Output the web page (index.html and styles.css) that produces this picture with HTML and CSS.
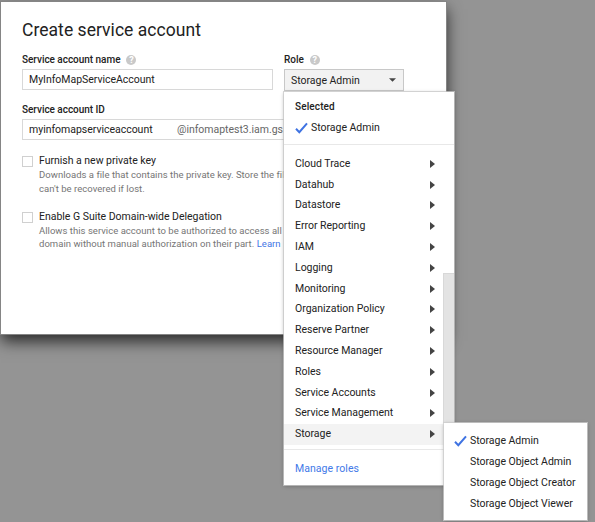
FILE: index.html
```html
<!DOCTYPE html>
<html lang="en">
<head>
<meta charset="utf-8">
<title>Create service account</title>
<link rel="stylesheet" href="styles.css">
</head>
<body>
<main class="dialog">
  <h1 class="title">Create service account</h1>
  <div class="top-row">
    <div class="name-field">
      <div class="label"><span>Service account name</span><span class="help">?</span></div>
      <div class="input">MyInfoMapServiceAccount</div>
    </div>
    <div class="role-field">
      <div class="label"><span>Role</span><span class="help">?</span></div>
      <div class="select"><span>Storage Admin</span><svg class="caret" viewBox="0 0 8 4"><path d="M0 0h8L4 4z"/></svg></div>
      <div class="menu">
        <div class="selected">
          <div class="heading">Selected</div>
          <div class="chosen"><svg class="check" viewBox="0 0 13 12"><path d="M1 6.8 4.3 10.2 12 1.3"/></svg><span>Storage Admin</span></div>
        </div>
        <div class="list">
          <div class="item"><span>Cloud Trace</span><i class="arrow"></i></div>
          <div class="item"><span>Datahub</span><i class="arrow"></i></div>
          <div class="item"><span>Datastore</span><i class="arrow"></i></div>
          <div class="item"><span>Error Reporting</span><i class="arrow"></i></div>
          <div class="item"><span>IAM</span><i class="arrow"></i></div>
          <div class="item"><span>Logging</span><i class="arrow"></i></div>
          <div class="item"><span>Monitoring</span><i class="arrow"></i></div>
          <div class="item"><span>Organization Policy</span><i class="arrow"></i></div>
          <div class="item"><span>Reserve Partner</span><i class="arrow"></i></div>
          <div class="item"><span>Resource Manager</span><i class="arrow"></i></div>
          <div class="item"><span>Roles</span><i class="arrow"></i></div>
          <div class="item"><span>Service Accounts</span><i class="arrow"></i></div>
          <div class="item"><span>Service Management</span><i class="arrow"></i></div>
          <div class="item active"><span>Storage</span><i class="arrow"></i></div>
          <div class="scrollbar"></div>
        </div>
        <div class="manage">Manage roles</div>
        <div class="submenu">
          <div class="subitem"><svg class="check" viewBox="0 0 13 12"><path d="M1 6.8 4.3 10.2 12 1.3"/></svg><span>Storage Admin</span></div>
          <div class="subitem"><span>Storage Object Admin</span></div>
          <div class="subitem"><span>Storage Object Creator</span></div>
          <div class="subitem"><span>Storage Object Viewer</span></div>
        </div>
      </div>
    </div>
  </div>
  <div class="label id-label">Service account ID</div>
  <div class="input id-input"><span class="id-value">myinfomapserviceaccount</span><span class="domain">@infomaptest3.iam.gs</span></div>
  <div class="option">
    <span class="box"></span>
    <div><div class="option-title">Furnish a new private key</div>
    <div class="hint">Downloads a file that contains the private key. Store the fil<br>can't be recovered if lost.</div></div>
  </div>
  <div class="option">
    <span class="box"></span>
    <div><div class="option-title">Enable G Suite Domain-wide Delegation</div>
    <div class="hint">Allows this service account to be authorized to access all<br>domain without manual authorization on their part. <a>Learn</a></div></div>
  </div>
</main>
</body>
</html>
```

FILE: styles.css
```css
* { box-sizing: border-box; }
body {
  margin: 0;
  height: 522px;
  padding: 2px 0 0 1px;
  overflow: hidden;
  background: #949494;
  font: 10.5px/14px Roboto, sans-serif;
  letter-spacing: -.02px;
  color: #222;
}
.dialog {
  width: 445px;
  height: 332px;
  padding: 16px 21px 0;
  background: #fff;
  box-shadow: 0 0 0 1px #858585, 0 7px 15px 0 rgba(0,0,0,.75);
}
.title { margin: 0; font-size: 17.5px; line-height: 24px; font-weight: 400; letter-spacing: .04px; }
.top-row { display: flex; gap: 11px; margin-top: 11px; }
.name-field { width: 251px; }
.role-field { position: relative; width: 120px; }
.label { display: flex; align-items: center; height: 14px; font-size: 10px; font-weight: 500; letter-spacing: -.03px; }
.help {
  display: flex; align-items: center; justify-content: center;
  width: 10px; height: 10px; margin-left: 6px;
  border-radius: 50%; background: #c9c9c9; color: #fff;
  font-size: 9px; letter-spacing: 0; font-weight: 700;
}
.input, .select { height: 21px; margin-top: 2px; border: 1px solid #d8d8d8; padding: 0 6px; line-height: 19px; white-space: nowrap; }
.select { display: flex; align-items: center; justify-content: space-between; height: 22px; border-color: #c8c8c8; background: #f2f2f2; }
.caret { width: 7px; height: 4px; margin-right: 1px; fill: #444; }
.id-label { margin-top: 12px; }
.id-input { display: flex; width: 262px; border-right: 0; }
.id-value { flex: none; width: 148px; }
.domain { color: #666; }
.option { display: flex; gap: 6px; margin-top: 14px; height: 41px; }
.box { width: 11px; height: 11px; margin-top: 2px; border: 1px solid #d0d0d0; flex: none; }
.option-title { line-height: 14px; letter-spacing: -.02px; }
.hint { font-size: 9.5px; line-height: 13.6px; letter-spacing: .03px; color: #757575; white-space: nowrap; }
.hint a { color: #3f75e5; }
.option + .option { margin-top: 14.5px; }
.menu {
  position: absolute; z-index: 2; left: 0; top: 39px; width: 170px; height: 393px;
  background: #fff; box-shadow: 0 0 0 1px rgba(200,200,200,.75), 0 1px 4px rgba(0,0,0,.3);
}
.selected { height: 53px; padding: 8px 11px 0; border-bottom: 1px solid #e8e8e8; }
.heading { font-size: 10px; font-weight: 500; letter-spacing: .12px; }
.chosen { display: flex; align-items: center; height: 14px; margin-top: 7px; }
.check { width: 13px; height: 12px; margin-right: 3px; fill: none; stroke: #3f73e2; stroke-width: 2; }
.list { position: relative; height: 305px; padding-top: 8.5px; border-bottom: 1px solid #e8e8e8; }
.item { display: flex; align-items: center; justify-content: space-between; height: 20.8px; padding: 0 19px 0 11px; }
.active { background: #f3f3f3; }
.arrow { border-left: 5px solid #444; border-top: 4px solid transparent; border-bottom: 4px solid transparent; }
.scrollbar { position: absolute; right: 0; top: 128px; width: 11px; height: 150px; background: #e3e3e3; border: 1px solid #d8d8d8; border-width: 1px 0 0 1px; }
.manage { padding: 12px 11px; letter-spacing: .05px; color: #4279e8; }
.submenu { position: absolute; left: 160px; top: 331px; width: 143px; height: 97px; padding: 8px 10px; background: #fff; box-shadow: 0 0 0 1px rgba(205,205,205,.75), 0 1px 4px rgba(0,0,0,.3); }
.subitem { display: flex; align-items: center; height: 20.8px; padding-left: 16px; white-space: nowrap; }
.subitem .check { margin-left: -16px; }
```
